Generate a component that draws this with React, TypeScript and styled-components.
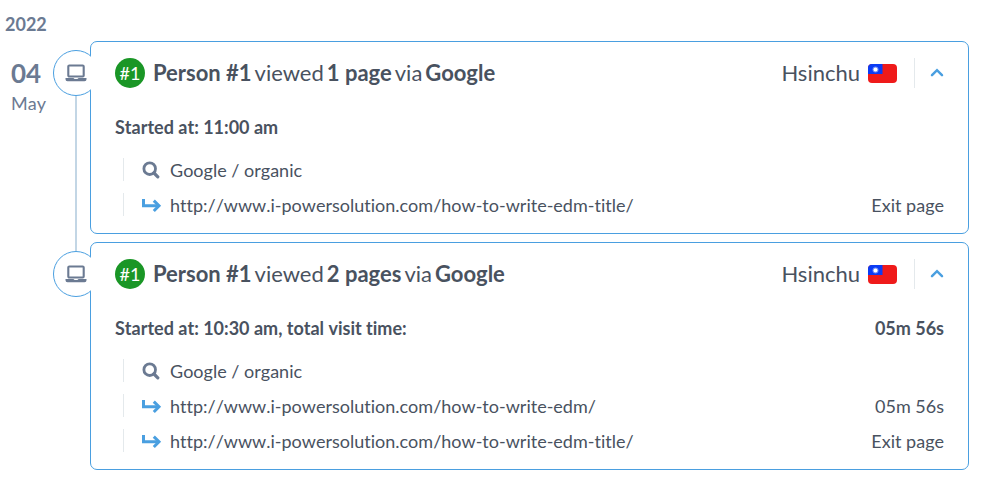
import React, { useState } from 'react';
import styled, { createGlobalStyle } from 'styled-components';

const color = {
  text: '#49525f',
  muted: '#6b7a92',
  blue: '#4a9fe0',
  line: '#c3d6e5',
  rule: '#e4e9ec',
  green: '#1a9626',
};

const GlobalStyle = createGlobalStyle`
  * { box-sizing: border-box; }
  body {
    margin: 0;
    background: #fff;
    color: ${color.text};
    font-family: Lato, "Liberation Sans", sans-serif;
    font-size: 18px;
    line-height: 24px;
    font-variant-ligatures: none;
    font-kerning: none;
  }
  h2, h3, p, ul { margin: 0; padding: 0; font-size: inherit; font-weight: inherit; }
  ul { list-style: none; }
  svg { display: block; }
`;

const Page = styled.main`
  padding: 12px 38px 15px 0;
`;

const Year = styled.h2`
  padding-left: 5px;
  margin-bottom: 5px;
  color: ${color.muted};
  font-weight: 700;
`;

const Timeline = styled.div`
  display: flex;
  flex-direction: column;
  gap: 8px;
`;

const Entry = styled.article`
  display: grid;
  grid-template-columns: 53px 37px minmax(0, 1fr);
`;

const DateLabel = styled.time`
  display: flex;
  flex-direction: column;
  padding: 16px 0 0 11px;
  color: ${color.muted};
`;

const Day = styled.span`
  font-size: 26px;
  line-height: 32px;
  font-weight: 700;
`;

const Month = styled.span`
  line-height: 28px;
`;

const Rail = styled.div`
  display: flex;
  flex-direction: column;
  padding-top: 9px;
`;

/* One pixel wider than the rail, so the marker opens the card's left border. */
const MarkerClip = styled.div`
  position: relative;
  z-index: 1;
  width: 38px;
  overflow: hidden;
`;

const Marker = styled.div`
  display: flex;
  align-items: center;
  justify-content: center;
  width: 46px;
  height: 46px;
  border: 1px solid ${color.blue};
  border-radius: 50%;
  background: #fff;
  color: ${color.muted};
`;

const Connector = styled.div`
  flex: 1;
  width: 2px;
  margin: 0 0 -17px 22px;
  background: ${color.line};
`;

const Card = styled.section`
  padding: 16px 24px 17px;
  border: 1px solid ${color.blue};
  border-radius: 7px;
  background: #fff;
`;

const Header = styled.header`
  display: flex;
  align-items: center;
  height: 30px;
  font-size: 22px;
  line-height: 30px;
  font-kerning: normal;
`;

const Avatar = styled.span`
  display: flex;
  align-items: center;
  justify-content: center;
  width: 30px;
  height: 30px;
  margin-right: 8px;
  border-radius: 50%;
  background: ${color.green};
  color: #fff;
  font-size: 18px;
`;

const Title = styled.h3`
  display: flex;
  flex: 1;
  gap: 3px;
`;

const Place = styled.span`
  display: flex;
  align-items: center;
  gap: 8px;
  padding-right: 17px;
  border-right: 1px solid ${color.rule};
`;

const Toggle = styled.button`
  display: flex;
  align-items: center;
  justify-content: flex-end;
  width: 29px;
  height: 30px;
  padding: 0;
  border: 0;
  background: none;
  color: ${color.blue};
  cursor: pointer;
`;

const Started = styled.p`
  display: flex;
  justify-content: space-between;
  margin: 27px 0 19px;
  font-weight: 700;
`;

const Steps = styled.ul`
  display: flex;
  flex-direction: column;
  gap: 12px;
  padding-left: 8px;
`;

const Step = styled.li`
  display: flex;
  align-items: center;
  height: 23px;
  padding-left: 18px;
  border-left: 1px solid ${color.rule};
`;

const StepIcon = styled.span`
  width: 28px;
`;

const StepLabel = styled.span`
  flex: 1;
`;

const LaptopIcon = () => (
  <svg width="22" height="18" viewBox="0 0 22 18" fill="none" aria-hidden="true">
    <rect x="3.300" y="1.500" width="15.400" height="11" rx="1" stroke="currentColor" strokeWidth="2.100" />
    <path d="M0.500 14H8.500Q9 15 10 15H12Q13 15 13.500 14H21.500V15.200Q21.500 17.200 19.500 17.200H2.500Q0.500 17.200 0.500 15.200Z" fill="currentColor" />
  </svg>
);

const SearchIcon = () => (
  <svg width="18" height="18" viewBox="0 0 18 18" fill="none" stroke={color.muted} aria-hidden="true">
    <circle cx="7.700" cy="7.700" r="5.800" strokeWidth="2.800" />
    <path d="M12 12L15.800 15.800" strokeWidth="3.200" strokeLinecap="round" />
  </svg>
);

const ArrowIcon = () => (
  <svg width="20" height="16" viewBox="0 0 20 16" fill="none" stroke={color.blue} strokeWidth="3" aria-hidden="true">
    <path d="M1.500 2V8.800H16.500" />
    <path d="M11.800 3.600L17 8.800L11.800 14" />
  </svg>
);

const ChevronIcon = ({ open }: { open: boolean }) => (
  <svg width="14" height="10" viewBox="0 0 14 10" fill="none" stroke="currentColor" strokeWidth="2.500" strokeLinecap="round" aria-hidden="true">
    <path d={open ? 'M2 7.200L7 2.200L12 7.200' : 'M2 2.200L7 7.200L12 2.200'} />
  </svg>
);

const TaiwanFlag = () => (
  <svg width="29" height="19" viewBox="0 0 29 19" role="img" aria-label="Taiwan">
    <rect width="29" height="19" rx="4" fill="#ef1a1a" />
    <path d="M4 0H14.500V10H0V4Q0 0 4 0Z" fill="#0a3cf5" />
    <circle cx="7.500" cy="5.500" r="3" fill="#fff" opacity="0.4" />
    <circle cx="7.500" cy="5.500" r="2" fill="#fff" />
  </svg>
);

interface StepData {
  kind: 'source' | 'page';
  label: string;
  detail?: string;
}

interface Visit {
  pages: string;
  started: string;
  total?: string;
  steps: StepData[];
}

const visits: Visit[] = [
  {
    pages: '1 page',
    started: 'Started at: 11:00 am',
    steps: [
      { kind: 'source', label: 'Google / organic' },
      { kind: 'page', label: 'http://www.i-powersolution.com/how-to-write-edm-title/', detail: 'Exit page' },
    ],
  },
  {
    pages: '2 pages',
    started: 'Started at: 10:30 am, total visit time:',
    total: '05m 56s',
    steps: [
      { kind: 'source', label: 'Google / organic' },
      { kind: 'page', label: 'http://www.i-powersolution.com/how-to-write-edm/', detail: '05m 56s' },
      { kind: 'page', label: 'http://www.i-powersolution.com/how-to-write-edm-title/', detail: 'Exit page' },
    ],
  },
];

const VisitCard = ({ visit }: { visit: Visit }) => {
  const [open, setOpen] = useState(true);
  return (
    <Card>
      <Header>
        <Avatar>#1</Avatar>
        <Title>
          <b>Person #1</b> <span>viewed</span> <b>{visit.pages}</b> <span>via</span> <b>Google</b>
        </Title>
        <Place>
          Hsinchu <TaiwanFlag />
        </Place>
        <Toggle type="button" aria-label="Toggle visit details" aria-expanded={open} onClick={() => setOpen(!open)}>
          <ChevronIcon open={open} />
        </Toggle>
      </Header>
      {open && (
        <>
          <Started>
            <span>{visit.started}</span>
            {visit.total && <span>{visit.total}</span>}
          </Started>
          <Steps>
            {visit.steps.map((step) => (
              <Step key={step.label}>
                <StepIcon>{step.kind === 'source' ? <SearchIcon /> : <ArrowIcon />}</StepIcon>
                <StepLabel>{step.label}</StepLabel>
                {step.detail && <span>{step.detail}</span>}
              </Step>
            ))}
          </Steps>
        </>
      )}
    </Card>
  );
};

export default function App() {
  return (
    <>
      <GlobalStyle />
      <Page>
        <Year>2022</Year>
        <Timeline>
          {visits.map((visit, index) => (
            <Entry key={visit.started}>
              {index === 0 ? (
                <DateLabel dateTime="2022-05-04">
                  <Day>04</Day>
                  <Month>May</Month>
                </DateLabel>
              ) : (
                <span />
              )}
              <Rail>
                <MarkerClip>
                  <Marker>
                    <LaptopIcon />
                  </Marker>
                </MarkerClip>
                {index < visits.length - 1 && <Connector />}
              </Rail>
              <VisitCard visit={visit} />
            </Entry>
          ))}
        </Timeline>
      </Page>
    </>
  );
}
